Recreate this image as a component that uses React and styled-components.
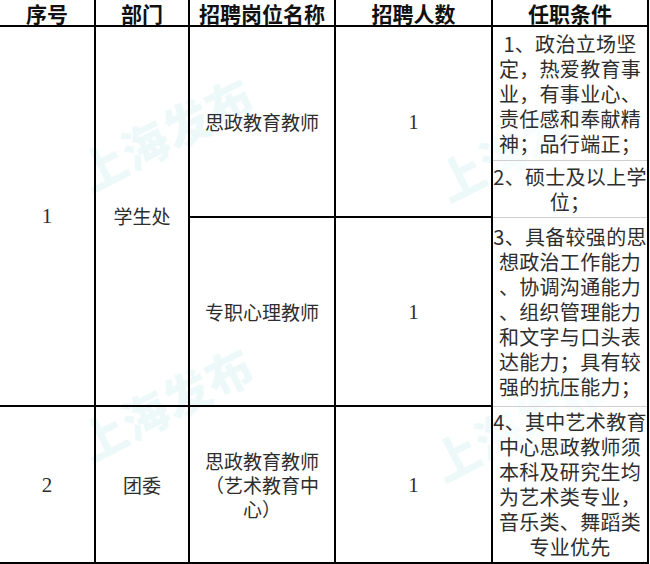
import React from 'react';
//Styling
import styled, { createGlobalStyle } from 'styled-components';

const GlobalStyle = createGlobalStyle`
	html, body {
		margin: 0;
		padding: 0;
		background: #ffffff;
	}
	body {
		width: 650px;
		height: 564px;
		overflow: hidden;
		font-family: 'Noto Sans CJK SC', 'Noto Sans', sans-serif;
	}
`;

//Data
const rows = [
	{
		no: '1',
		dept: '学生处',
		jobs: [
			{
				name: ['思政教育教师'],
				count: '1',
				terms: [
					['1、政治立场坚', '定，热爱教育事', '业，有事业心、', '责任感和奉献精', '神；品行端正；'],
					['2、硕士及以上学', '位；'],
				],
			},
			{
				name: ['专职心理教师'],
				count: '1',
				terms: [
					[
						'3、具备较强的思',
						'想政治工作能力',
						'、协调沟通能力',
						'、组织管理能力',
						'和文字与口头表',
						'达能力；具有较',
						'强的抗压能力；',
					],
				],
			},
		],
	},
	{
		no: '2',
		dept: '团委',
		jobs: [
			{
				name: ['思政教育教师', '（艺术教育中', '心）'],
				count: '1',
				terms: [
					['4、其中艺术教育', '中心思政教师须', '本科及研究生均', '为艺术类专业，', '音乐类、舞蹈类', '专业优先'],
				],
			},
		],
	},
];

//heights of each sub row (one per term block)
const termHeights = [134, 57, 189, 157];

//watermark spots: left edge and bottom of the rotated text
const marks = [
	{ x: 92, y: 195 },
	{ x: 450, y: 205 },
	{ x: 92, y: 465 },
	{ x: 445, y: 485 },
];

const App = () => {
	let termIndex = 0;
	const body = [];
	rows.forEach(row => {
		const rowSpan = row.jobs.reduce((n, job) => n + job.terms.length, 0);
		row.jobs.forEach((job, j) => {
			job.terms.forEach((term, t) => {
				const h = termHeights[termIndex++];
				body.push(
					<Row key={`${row.no}-${j}-${t}`} $height={h}>
						{j === 0 && t === 0 && (
							<>
								<Cell rowSpan={rowSpan} $first $num>
									{row.no}
								</Cell>
								<Cell rowSpan={rowSpan}>{row.dept}</Cell>
							</>
						)}
						{t === 0 && (
							<>
								<Cell rowSpan={job.terms.length}>
									{job.name.map(line => (
										<Line key={line}>{line}</Line>
									))}
								</Cell>
								<Cell rowSpan={job.terms.length} $num>
									{job.count}
								</Cell>
							</>
						)}
						<TermCell>
							{term.map(line => (
								<Line key={line}>{line}</Line>
							))}
						</TermCell>
					</Row>
				);
			});
		});
	});

	return (
		<>
			<GlobalStyle />
			<Page>
				{marks.map((m, i) => (
					<Watermark key={i} style={{ left: m.x, top: m.y }}>
						上海发布
					</Watermark>
				))}
				<Table>
					<colgroup>
						<col style={{ width: 95 }} />
						<col style={{ width: 94 }} />
						<col style={{ width: 146 }} />
						<col style={{ width: 157 }} />
						<col style={{ width: 156 }} />
					</colgroup>
					<thead>
						<Row $height={26}>
							<Head $first>序号</Head>
							<Head>部门</Head>
							<Head>招聘岗位名称</Head>
							<Head>招聘人数</Head>
							<Head>任职条件</Head>
						</Row>
					</thead>
					<tbody>{body}</tbody>
				</Table>
			</Page>
		</>
	);
};

const Page = styled.div`
	position: relative;
	width: 650px;
	height: 564px;
	overflow: hidden;
`;

const Watermark = styled.div`
	position: absolute;
	z-index: 0;
	font-family: 'Noto Sans CJK SC', sans-serif;
	font-weight: 900;
	font-size: 46px;
	line-height: 46px;
	letter-spacing: 1px;
	color: rgba(130, 205, 210, 0.14);
	transform: translateY(-46px) rotate(-27deg);
	transform-origin: left bottom;
	filter: blur(0.6px);
	white-space: nowrap;
	pointer-events: none;
`;

const Table = styled.table`
	position: relative;
	z-index: 1;
	width: 648px;
	table-layout: fixed;
	border-collapse: collapse;
	border-bottom: 2px solid #000;
	color: #2e2e2e;
`;

const Row = styled.tr`
	height: ${p => p.$height}px;
`;

const Head = styled.th`
	padding: 0;
	border: 2px solid #000;
	border-top: none;
	${p => p.$first && 'border-left: none;'}
	font-size: 21px;
	font-weight: 700;
	line-height: 24px;
	color: #111;
	text-align: center;
	vertical-align: middle;
`;

const Cell = styled.td`
	padding: 0;
	border: 2px solid #000;
	${p => p.$first && 'border-left: none;'}
	font-family: ${p =>
		p.$num
			? "'Liberation Serif', 'Noto Sans CJK SC', serif"
			: "'Noto Sans CJK SC', sans-serif"};
	font-size: ${p => (p.$num ? '21px' : '19px')};
	font-weight: 400;
	line-height: 24px;
	text-align: center;
	vertical-align: middle;
`;

const TermCell = styled.td`
	padding: 0;
	border-left: 2px solid #000;
	border-right: 2px solid #000;
	border-top: 1px solid #cfcfcf;
	border-bottom: 1px solid #cfcfcf;
	background: rgba(255, 255, 255, 0.55);
	font-size: 20px;
	line-height: 25px;
	text-align: center;
	vertical-align: middle;
	white-space: nowrap;
	letter-spacing: 0.3px;
`;

const Line = styled.div`
	display: block;
`;

export default App;
